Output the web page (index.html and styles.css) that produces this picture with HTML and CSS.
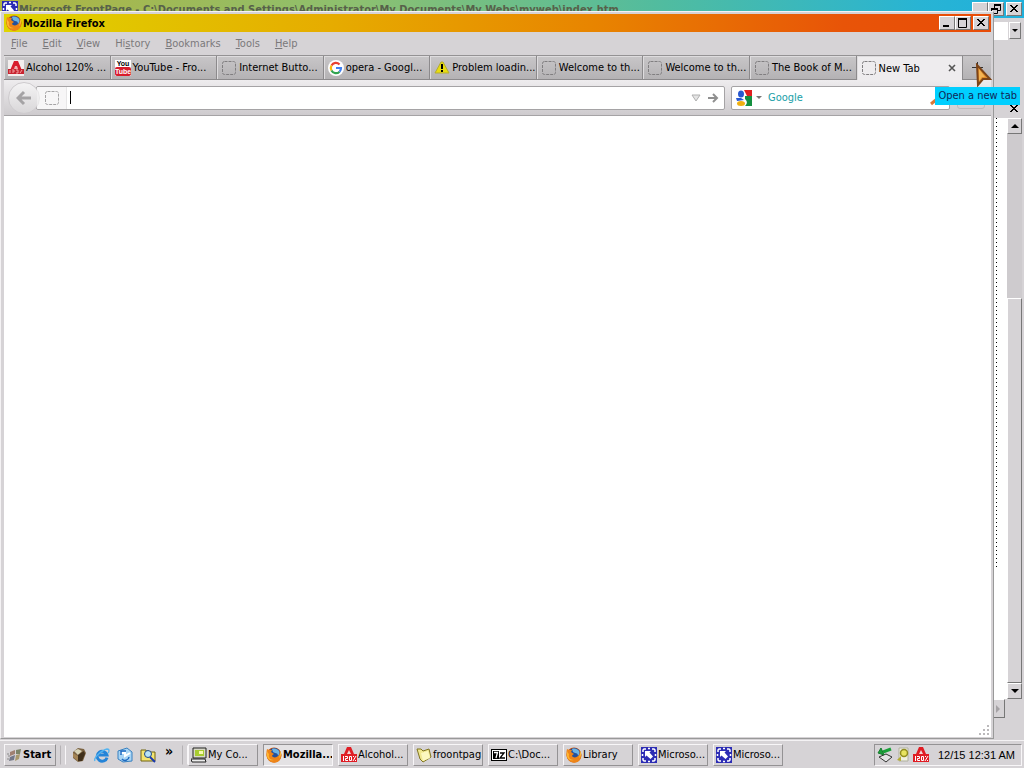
FILE: index.html
```html
<!DOCTYPE html>
<html lang="en">
<head>
    <meta charset="UTF-8">
    <meta name="viewport" content="width=device-width, initial-scale=1.0">
    <title>Mozilla Firefox</title>
    <link rel="stylesheet" href="styles.css">
</head>
<body>
    <!-- shared icons -->
    <svg class="sprite" aria-hidden="true">
        <symbol id="firefox" viewBox="0 0 16 16">
            <circle cx="8" cy="8" r="7.5" fill="#c4500c"/>
            <circle cx="8.5" cy="6.500" r="5.6" fill="#24509c"/>
            <path d="M6 2c2-1 6 0 7 2 1 2 0 4-1 5 0-2-1-3-3-3l-2-1z" fill="#6cb4e4"/>
            <path d="M1 2c1 0 1 1 2 1l3 0-1 2 3 2c-1 1-2 1-2 2 1 2 5 2 7-1 1-2 1-3 0-5 3 3 3 8 0 11-3 2.500-8 2-10-.5C0 11 0 6 1 2z" fill="#ee8418"/>
            <path d="M1 3c0 2 1 3 2 4-1 3 1 6 5 6-4 1-7-1-7-5z" fill="#ffb830"/>
            <path d="M14 4c1 2 1 4 0 6l-1 1c1-2 1-4 1-7z" fill="#ffd040"/>
        </symbol>
        <symbol id="frontpage" viewBox="0 0 16 16">
            <rect width="16" height="16" fill="#2c2cb4"/>
            <path d="M2 5V3l1-1h2M11 2h2l1 1v2M14 11v2l-1 1h-2M5 14H3l-1-1v-2M7 1.500h2M7 14.500h2M1.500 7v2M14.500 7v2" fill="none" stroke="#fff" stroke-width="1.500"/>
            <path d="M4 4h6L8.500 5.500 12 9.500 9.500 12 5.500 8.500 4 10z" fill="#fff"/>
        </symbol>
        <symbol id="alcohol" viewBox="0 0 16 16">
            <path d="M6 0h4l3 7h3v8H0V7h3z" fill="#e01c24"/>
            <path d="M8 3l2 4H6z" fill="#f4d4d4"/>
            <path d="M2.500 9v5M4 9.500h2.500v2h-2v2H7M8.500 9.500h2v4h-2zM12 14l3-5M12 9.500h1M14 13.500h1" fill="none" stroke="#fff"/>
        </symbol>
        <symbol id="blank" viewBox="0 0 16 16">
            <rect x="1.500" y="1.500" width="13" height="13" rx="2" fill="none" stroke="#807e80" stroke-dasharray="3 1"/>
        </symbol>
        <symbol id="close" viewBox="0 0 10 10">
            <path d="M1 1l7 7M2 1l7 7M8 1L1 8M9 1L2 8" stroke="#000" stroke-width="1"/>
        </symbol>
    </svg>

    <main class="desktop">
        <section class="frontpage">
            <header class="fp-title">
                <svg class="icon"><use href="#frontpage"/></svg>
                <h2>Microsoft FrontPage - C:\Documents and Settings\Administrator\My Documents\My Webs\myweb\index.htm</h2>
                <button class="winbtn" aria-label="Minimize"></button>
                <button class="winbtn" aria-label="Restore"><svg width="10" height="10" viewBox="0 0 10 10"><path d="M3.500 4V1M3 1h7M9.500 1v5.500H7" fill="none" stroke="#000"/><path d="M3 1h7M0 5h7" stroke="#000" stroke-width="2"/><path d="M.5 5v4.500h6V5" fill="none" stroke="#000"/></svg></button>
                <button class="winbtn last" aria-label="Close"><svg width="10" height="10"><use href="#close"/></svg></button>
            </header>
            <div class="fp-tools">
                <div class="fp-combo"></div>
                <button class="arrowbtn" aria-label="Styles"><span class="down"></span></button>
            </div>
            <div class="fp-close">
                <button class="plain" aria-label="Close page"><svg width="10" height="10"><use href="#close"/></svg></button>
            </div>
            <div class="fp-body">
                <div class="fp-page"><div class="dots"></div></div>
                <div class="scroll">
                    <button class="arrowbtn" aria-label="Scroll up"><span class="up"></span></button>
                    <div class="track"></div>
                    <div class="thumb"></div>
                    <button class="arrowbtn" aria-label="Scroll down"><span class="down"></span></button>
                </div>
            </div>
            <div class="fp-bottom">
                <button class="arrowbtn" aria-label="Scroll right"><span class="right"></span></button>
            </div>
        </section>

        <section class="firefox">
            <header class="title">
                <svg class="icon"><use href="#firefox"/></svg>
                <h1>Mozilla Firefox</h1>
                <button class="winbtn" aria-label="Minimize"><svg width="10" height="10"><path d="M1 8h6" stroke="#000" stroke-width="2"/></svg></button>
                <button class="winbtn" aria-label="Maximize"><svg width="10" height="10"><path d="M.5 1v8.500h8V1" fill="none" stroke="#000"/><path d="M0 1h9" stroke="#000" stroke-width="2"/></svg></button>
                <button class="winbtn last" aria-label="Close"><svg width="10" height="10"><use href="#close"/></svg></button>
            </header>
            <nav class="menu">
                <button><u>F</u>ile</button>
                <button><u>E</u>dit</button>
                <button><u>V</u>iew</button>
                <button>Hi<u>s</u>tory</button>
                <button><u>B</u>ookmarks</button>
                <button><u>T</u>ools</button>
                <button><u>H</u>elp</button>
            </nav>
            <div class="tabs">
                <button class="tab"><svg class="icon" viewBox="0 0 16 16"><rect width="16" height="16" fill="#f4eeee"/><path d="M6 1h4l5 12h-4l-1-3H6l-1 3H1z" fill="#d81c2c"/><path d="M7 6h2l1 3H6z" fill="#f0b0b0"/><path d="M0 9h16v5H0z" fill="#c82430"/><path d="M2 10v3M4 10h2v2H4M8 10h2v3H8M12 13l2-3" fill="none" stroke="#f0a0a0"/></svg><span>Alcohol 120% ...</span></button>
                <button class="tab"><svg class="icon" viewBox="0 0 16 16"><rect width="16" height="16" fill="#fff"/><rect y="7" width="16" height="9" rx="2" fill="#d81c2c"/><text x="8" y="6" class="yt">You</text><text x="8" y="14" class="yt tube">Tube</text></svg><span>YouTube - Fro...</span></button>
                <button class="tab"><svg class="icon"><use href="#blank"/></svg><span>Internet Butto...</span></button>
                <button class="tab"><svg class="icon" viewBox="0 0 16 16"><circle cx="8" cy="8" r="8" fill="#fff"/><g fill="none" stroke-width="2.200"><path d="M3.500 5.500A5 5 0 0 1 11.500 4.400" stroke="#e84030"/><path d="M3.500 5.500a5 5 0 0 0 0 5" stroke="#f8b808"/><path d="M3.500 10.500a5 5 0 0 0 8 1.200" stroke="#30a450"/><path d="M11.500 11.700A5 5 0 0 0 13 8H8" stroke="#4080f0"/></g></svg><span>opera - Googl...</span></button>
                <button class="tab"><svg class="icon" viewBox="0 0 16 16"><path d="M7 2h2l6 11H1z" fill="#e8dc10" stroke="#b4ac30"/><path d="M8 4v5M8 10v2" stroke="#000" stroke-width="2"/></svg><span>Problem loadin...</span></button>
                <button class="tab"><svg class="icon"><use href="#blank"/></svg><span>Welcome to th...</span></button>
                <button class="tab"><svg class="icon"><use href="#blank"/></svg><span>Welcome to th...</span></button>
                <button class="tab"><svg class="icon"><use href="#blank"/></svg><span>The Book of M...</span></button>
                <button class="tab active"><svg class="icon"><use href="#blank"/></svg><span>New Tab</span><svg class="tabclose" viewBox="0 0 8 8"><path d="M1 1l6 6M7 1L1 7" stroke="#555" stroke-width="1.600"/></svg></button>
                <button class="newtab" aria-label="Open a new tab"><svg width="11" height="11"><path d="M5.500 0v11M0 5.500h11" stroke="#333"/></svg></button>
            </div>
            <div class="toolbar">
                <button class="back" aria-label="Back"><svg width="16" height="16"><path d="M15 8H4M8 2L2 8l6 6" fill="none" stroke="#a5a3a5" stroke-width="3"/></svg></button>
                <div class="url">
                    <svg class="icon site"><use href="#blank"/></svg>
                    <span class="caret"></span>
                    <input type="text" aria-label="Address">
                    <svg width="10" height="8"><path d="M1 1h8L5 7z" fill="#e4e4e4" stroke="#b0b0b0"/></svg>
                    <svg width="12" height="12"><path d="M1 6h9M6 2l4 4-4 4" fill="none" stroke="#909090" stroke-width="2"/></svg>
                </div>
                <div class="search">
                    <svg class="icon" viewBox="0 0 16 16"><rect width="16" height="16" fill="#fff"/><path d="M8 0h8v6h-5z" fill="#e02020"/><path d="M9 6h7v10H9c3-3 2-5 0-7z" fill="#149040"/><ellipse cx="5" cy="4" rx="3" ry="3.500" fill="#2858d0"/><path d="M0 8h5l3 2-7 1z" fill="#2858d0"/><ellipse cx="5" cy="13.500" rx="4" ry="2.500" fill="#f0b010"/></svg>
                    <span class="pick"></span>
                    <input type="text" placeholder="Google" aria-label="Search">
                    <svg width="18" height="16"><circle cx="11" cy="6" r="4" fill="#eef4ff" stroke="#8090b0"/><path d="M8 9l-6 5" stroke="#d87838" stroke-width="3"/></svg>
                </div>
                <button class="home" aria-label="Home"></button>
            </div>
            <div class="content">
                <svg class="grip" width="11" height="11"><path d="M8 1h2M8 5h2M8 9h2M4 5h2M4 9h2M0 9h2" stroke="#bbb9bb" stroke-width="2"/></svg>
            </div>
        </section>

        <div class="tooltip" role="tooltip">Open a new tab</div>
        <svg class="cursor" width="17" height="24" viewBox="0 0 17 24"><path d="M2 2l13 14-7 0-5 6z" fill="#e08c28" stroke="#7c4418" stroke-width="2"/><path d="M4 6l6 8-3 0-3 4z" fill="#f4b454"/></svg>
    </main>

    <footer class="taskbar">
        <button class="start"><svg class="icon" viewBox="0 0 16 16"><path d="M3 5l5-2 0 4-5 2z" fill="#a08070"/><path d="M9 3l5-1-1 5-4 0z" fill="#7c8468"/><path d="M3 10l5-2-1 5-5 1z" fill="#747888"/><path d="M9 8l4-1-1 5-4 2z" fill="#a8986c"/><path d="M0 7h2M0 12h2M1 9h2" stroke="#888"/></svg>Start</button>
        <span class="sep"></span>
        <div class="quick">
            <button aria-label="Show desktop"><svg class="icon" viewBox="0 0 16 16"><path d="M2 5l5-4 6 1 2 4-3 8-5 1-5-4z" fill="#7c6444"/><path d="M3 4l4-2 4 2-4 4z" fill="#d8d4b8"/><path d="M7 8l6-4 1 3-3 7H7z" fill="#40301c"/><path d="M2 6l5 3v5l-5-4z" fill="#a48454"/></svg></button>
            <button aria-label="Internet Explorer"><svg class="icon" viewBox="0 0 16 16"><path d="M13 10.500A5 5 0 1 1 13 8H5" fill="none" stroke="#2484d8" stroke-width="3"/><path d="M1 14C-1 11 8 3 13 2c3 0 2 3 1 4" fill="none" stroke="#54b4f0" stroke-width="1.300"/></svg></button>
            <button aria-label="Outlook Express"><svg class="icon" viewBox="0 0 16 16"><path d="M1 4l9-3 5 4v9l-9 1-5-3z" fill="#a8d4f4" stroke="#3880c0"/><path d="M3 6h5v3l5-3" fill="none" stroke="#fff" stroke-width="2"/><path d="M5 12a4 4 0 0 0 7-2M4 8V4h5" fill="none" stroke="#1c68c0" stroke-width="1.500"/></svg></button>
            <button aria-label="Search"><svg class="icon" viewBox="0 0 16 16"><path d="M1 3h5l1 2h8v9H1z" fill="#f4e470" stroke="#706410"/><circle cx="8" cy="7" r="3.500" fill="#b8e4f8" stroke="#204880"/><path d="M10 10l5 5" stroke="#1838b0" stroke-width="2"/></svg></button>
        </div>
        <button class="more" aria-label="More">»</button>
        <span class="sep"></span>
        <div class="tasks">
            <button class="task"><svg class="icon" viewBox="0 0 16 16"><path d="M2 1h13v10H2z" fill="#d8d8c8" stroke="#222"/><path d="M4 3h9v6H4z" fill="#a8cc30"/><path d="M8 4h4v3H8z" fill="#f8f8b0"/><path d="M0 12h14l1 3H1z" fill="#ececec" stroke="#222"/></svg><span>My Co...</span></button>
            <button class="task pressed"><svg class="icon"><use href="#firefox"/></svg><span>Mozilla...</span></button>
            <button class="task"><svg class="icon"><use href="#alcohol"/></svg><span>Alcohol...</span></button>
            <button class="task"><svg class="icon" viewBox="0 0 16 16"><path d="M1 2l4 0 2 2 6-2 2 8-3 2-5 3-3-3z" fill="#f0e890" stroke="#807420"/><path d="M5 6l7-2 2 7-7 3z" fill="#fcf8c0"/></svg><span>froontpag</span></button>
            <button class="task"><svg class="icon" viewBox="0 0 16 16"><rect x=".5" y="2.500" width="15" height="11" fill="#fff" stroke="#000"/><path d="M2 4h6v8H2z" fill="#000"/><path d="M3 5.500h3.500L5 11" fill="none" stroke="#fff" stroke-width="1.300"/><path d="M9 6h4l-4 5h5" fill="none" stroke="#000" stroke-width="1.300"/></svg><span>C:\Doc...</span></button>
            <button class="task"><svg class="icon"><use href="#firefox"/></svg><span>Library</span></button>
            <button class="task"><svg class="icon"><use href="#frontpage"/></svg><span>Microso...</span></button>
            <button class="task"><svg class="icon"><use href="#frontpage"/></svg><span>Microso...</span></button>
        </div>
        <div class="tray">
            <svg class="icon" viewBox="0 0 16 16"><path d="M2 10l7-3 6 3-6 5z" fill="#e4e4e4" stroke="#333"/><path d="M14 2L6 5" stroke="#18a038" stroke-width="3"/><path d="M4 1L1 6l6 2z" fill="#18a038" stroke="#187c30"/></svg>
            <svg class="icon" viewBox="0 0 16 16"><path d="M4 1h9v13H4z" fill="#f0f0e0" stroke="#b0b0a0"/><circle cx="9" cy="6" r="3.500" fill="#e8e460" stroke="#908c20" stroke-width="1.500"/><path d="M6 9l-4 4 4 1z" fill="#b4ac30"/></svg>
            <svg class="icon"><use href="#alcohol"/></svg>
            <time>12/15 12:31 AM</time>
        </div>
    </footer>
</body>
</html>
```
FILE: styles.css
```css
*{
    margin: 0;
    padding: 0;
    box-sizing: border-box;
}
body{
    height: 100vh;
    display: flex;
    flex-direction: column;
    overflow: hidden;
    background-color: #d6d3d6;
    font-family: "DejaVu Sans Condensed", "DejaVu Sans", sans-serif;
    font-size: 11px;
    color: #000;
}
button, input{
    font: inherit;
    color: inherit;
    border: 0;
    background: none;
}
svg{
    display: block;
    flex: none;
}
.sprite{
    position: absolute;
    width: 0;
    height: 0;
}
.icon{
    width: 16px;
    height: 16px;
}
.desktop{
    flex: 1;
    position: relative;
    min-height: 0;
}

/* window buttons */
.winbtn, .arrowbtn{
    flex: none;
    display: flex;
    align-items: center;
    justify-content: center;
    background-color: #d6d3d6;
    border: 1px solid;
    border-color: #fff #777 #777 #fff;
}
.winbtn{
    width: 16px;
    height: 14px;
}
.winbtn.last{
    margin-left: 2px;
}
.arrowbtn{
    width: 15px;
    height: 16px;
}
.down, .up, .right{
    border: 4px solid transparent;
}
.down{
    border-top-color: #000;
    border-bottom: 0;
}
.up{
    border-bottom-color: #000;
    border-top: 0;
}
.right{
    border-left-color: #a5a2a5;
    border-right: 0;
}

/* FrontPage window behind */
.frontpage{
    height: 100%;
    display: flex;
    flex-direction: column;
}
.fp-title{
    height: 18px;
    display: flex;
    align-items: center;
    padding: 0 2px;
    background: linear-gradient(to right, #b0b440, #8cc070 35%, #50bca0 65%, #28b4d4 90%, #20b0dc);
}
.fp-title h2{
    flex: 1;
    padding-left: 1px;
    font-size: 11px;
    white-space: nowrap;
    overflow: hidden;
    color: #57614a;
}
.fp-tools{
    height: 82px;
    display: flex;
    justify-content: flex-end;
    padding: 4px 3px 0 0;
}
.fp-combo{
    width: 40px;
    height: 18px;
    background-color: #fff;
    margin-right: 1px;
}
.fp-tools .arrowbtn{
    width: 12px;
    height: 17px;
}
.fp-tools .down{
    border-width: 3px 3px 0;
}
.fp-close{
    height: 18px;
    display: flex;
    justify-content: flex-end;
    align-items: center;
    padding-right: 5px;
}
.fp-body{
    flex: 1;
    display: flex;
    padding-right: 2px;
    min-height: 0;
}
.fp-page{
    flex: 1;
    background-color: #fff;
    display: flex;
    justify-content: flex-end;
}
.dots{
    width: 11px;
    height: 450px;
    background: repeating-linear-gradient(#000 0 1px, transparent 1px 4px) left / 1px 100% no-repeat;
}
.scroll{
    width: 15px;
    display: flex;
    flex-direction: column;
    background-color: #cecbce;
}
.track{
    flex: 3;
}
.thumb{
    flex: 7;
    background-color: #d6d3d6;
    border: 1px solid;
    border-color: #fff #777 #777 #fff;
}
.fp-bottom{
    height: 41px;
    display: flex;
    justify-content: flex-end;
    padding-right: 19px;
}
.fp-bottom .arrowbtn{
    height: 19px;
}

/* Firefox window */
.firefox{
    position: absolute;
    top: 11px;
    right: 30px;
    bottom: 1px;
    left: 0;
    display: flex;
    flex-direction: column;
    padding: 2px 2px 1px 3px;
    background-color: #d6d3d6;
    border: 1px solid;
    border-color: #f4f2f4 #999 #999 #f4f2f4;
}
.title{
    height: 18px;
    display: flex;
    align-items: center;
    padding: 0 2px 0 2px;
    background: linear-gradient(to right, #dfd400, #e6ac00 33%, #e88400 60%, #e85408 85%, #e84c08);
}
.title h1{
    flex: 1;
    padding-left: 1px;
    font-size: 11px;
}
.menu{
    height: 23px;
    display: flex;
    align-items: center;
    gap: 15px;
    padding: 0 7px;
    color: #7b797b;
}
.tabs{
    height: 25px;
    display: flex;
    border-top: 1px solid #949294;
}
.tab{
    flex: 1;
    min-width: 0;
    display: flex;
    align-items: center;
    gap: 2px;
    padding: 0 2px 0 4px;
    white-space: nowrap;
    overflow: hidden;
    background: linear-gradient(#c8c6c8, #b4b2b4);
    border: solid #8c8a8c;
    border-width: 0 1px 1px 0;
    box-shadow: inset 1px 1px #dedcde;
}
.tab.active{
    background: #eeecee;
    border-bottom: 0;
}
.tabclose{
    width: 8px;
    height: 8px;
    margin-left: auto;
    margin-right: 4px;
}
.yt{
    font: bold 7px "Liberation Sans", sans-serif;
    text-anchor: middle;
}
.tube{
    fill: #fff;
}
.newtab{
    width: 28px;
    display: flex;
    align-items: center;
    justify-content: center;
    background: linear-gradient(#c8c6c8, #b4b2b4);
    border-bottom: 1px solid #8c8a8c;
}
.toolbar{
    height: 36px;
    display: flex;
    align-items: center;
    padding: 0 6px 0 4px;
    background: linear-gradient(#eeecee, #cecbce);
    border-bottom: 1px solid #a5a3a5;
}
.back{
    position: relative;
    width: 32px;
    height: 32px;
    display: flex;
    align-items: center;
    justify-content: center;
    border: 1px solid #cecbce;
    border-radius: 50%;
    background: linear-gradient(#f4f3f4, #d9d7d9);
}
.url, .search{
    height: 24px;
    display: flex;
    align-items: center;
    background-color: #fff;
    border: 1px solid #a5a3a5;
    border-radius: 2px;
}
.url{
    flex: 1;
    gap: 6px;
    margin-left: -4px;
    padding: 0 5px 0 0;
}
.url input, .search input{
    flex: 1;
    min-width: 0;
    outline: 0;
}
.site{
    width: 30px;
    height: 22px;
    padding: 3px 6px 3px 7px;
    margin-right: -3px;
    background-color: #f4f3f4;
    border-right: 1px solid #dedcde;
    opacity: .7;
}
.caret{
    width: 1px;
    height: 13px;
    background-color: #000;
}
.search{
    width: 219px;
    margin-left: 6px;
    padding: 0 2px 0 4px;
}
.search input{
    color: #18949c;
}
.search input::placeholder{
    color: #18a0a8;
}
.pick{
    margin: 0 6px 0 4px;
    border: 3px solid transparent;
    border-top-color: #777;
    border-bottom: 0;
}
.home{
    width: 28px;
    height: 22px;
    margin-left: 7px;
    border: 1px solid #bdbbbd;
    border-radius: 3px;
}
.content{
    flex: 1;
    display: flex;
    justify-content: flex-end;
    align-items: flex-end;
    padding: 1px;
    background-color: #fff;
}
.tooltip{
    position: absolute;
    top: 87px;
    right: 4px;
    height: 18px;
    padding: 0 3px;
    line-height: 18px;
    background-color: #00cfff;
    color: #102858;
}
.cursor{
    position: absolute;
    top: 63px;
    right: 32px;
}

/* taskbar */
.taskbar{
    height: 28px;
    display: flex;
    align-items: center;
    padding: 0 2px 0 4px;
    background-color: #d6d3d6;
    border-top: 1px solid #f4f2f4;
}
.start, .task{
    height: 22px;
    display: flex;
    align-items: center;
    border: 1px solid;
    border-color: #f8f6f8 #949294 #949294 #f8f6f8;
    white-space: nowrap;
    overflow: hidden;
}
.start{
    width: 52px;
    padding-left: 2px;
    font-weight: bold;
}
.sep{
    width: 6px;
    height: 20px;
    margin-left: 4px;
    border: 1px solid;
    border-color: transparent #f8f6f8 transparent #b5b2b5;
}
.quick{
    display: flex;
    gap: 7px;
    margin-left: 5px;
}
.more{
    width: 22px;
    height: 22px;
    font-size: 14px;
    font-weight: bold;
    line-height: 12px;
    padding: 0 0 8px 4px;
}
.tasks{
    flex: 1;
    display: flex;
    gap: 5px;
}
.task{
    width: 70px;
    gap: 1px;
    padding-left: 2px;
}
.task.pressed{
    font-weight: bold;
    background-color: #e4e2e4;
    border-color: #949294 #f8f6f8 #f8f6f8 #949294;
}
.tray{
    height: 22px;
    display: flex;
    align-items: center;
    gap: 2px;
    padding: 0 6px 0 2px;
    border: 1px solid;
    border-color: #949294 #f8f6f8 #f8f6f8 #949294;
}
.tray time{
    margin-left: 7px;
    font-family: "Liberation Sans", sans-serif;
}
```
